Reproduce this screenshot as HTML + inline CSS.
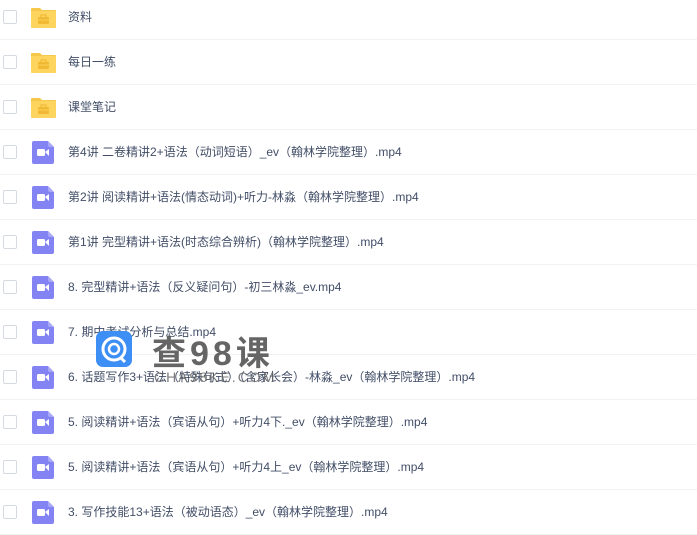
<!DOCTYPE html>
<html><head><meta charset="utf-8"><style>
body{margin:0;width:697px;height:531px;overflow:hidden;background:#fff;font-family:"Liberation Sans","Noto Sans CJK SC",sans-serif;position:relative}
.row{position:absolute;left:0;width:697px;height:45px;border-bottom:1px solid #f0f2f6;box-sizing:border-box}
.cb{position:absolute;left:3px;top:15px;width:12px;height:12px;border:1px solid #d5d9e0;border-radius:2px;background:#fff}
.ic{position:absolute;left:30px;top:12px}
.t{position:absolute;left:68px;top:15px;font-size:12px;color:#424e67;line-height:14px;white-space:nowrap}
.wm{position:absolute}
</style></head><body>
<div id="list"></div>
<script>
var F='<svg class="ic" width="27" height="22" viewBox="0 0 27 22"><path d="M1 2q0-1 1-1h8l2 2h13q1 0 1 1v16q0 1-1 1H2q-1 0-1-1z" fill="#f5c84c"/><rect x="1" y="4" width="25" height="17" rx="1" fill="#fdd55e"/><rect x="8" y="10" width="11" height="7" rx="1" fill="#f1b934"/><rect x="11" y="8" width="5" height="3" fill="none" stroke="#f1b934" stroke-width="1.2"/><line x1="8" y1="13" x2="19" y2="13" stroke="#fdd55e" stroke-width="0.8"/></svg>';
var V='<svg class="ic" style="left:32px;top:11px" width="22" height="23" viewBox="0 0 22 23"><path d="M2 0h14l6 6v15q0 2-2 2H2q-2 0-2-2V2q0-2 2-2z" fill="#8383f4"/><path d="M16 0l6 6h-4q-2 0-2-2z" fill="#a9a9f8"/><rect x="5" y="8" width="8" height="7" rx="1.5" fill="#fff"/><path d="M13 11l4-3v7z" fill="#fff"/></svg>';
var rows=[[F,"资料"],[F,"每日一练"],[F,"课堂笔记"],[V,"第4讲 二卷精讲2+语法（动词短语）_ev（翰林学院整理）.mp4"],[V,"第2讲 阅读精讲+语法(情态动词)+听力-林淼（翰林学院整理）.mp4"],[V,"第1讲 完型精讲+语法(时态综合辨析)（翰林学院整理）.mp4"],[V,"8. 完型精讲+语法（反义疑问句）-初三林淼_ev.mp4"],[V,"7. 期中考试分析与总结.mp4"],[V,"6. 话题写作3+语法（特殊句式）（含家长会）-林淼_ev（翰林学院整理）.mp4"],[V,"5. 阅读精讲+语法（宾语从句）+听力4下._ev（翰林学院整理）.mp4"],[V,"5. 阅读精讲+语法（宾语从句）+听力4上_ev（翰林学院整理）.mp4"],[V,"3. 写作技能13+语法（被动语态）_ev（翰林学院整理）.mp4"]];
var h='';rows.forEach(function(r,i){h+='<div class="row" style="top:'+(i*45-5)+'px"><div class="cb"></div>'+r[0]+'<div class="t">'+r[1]+'</div></div>';});
document.getElementById('list').innerHTML=h;
</script>
<svg class="wm" style="left:96px;top:331px" width="36" height="36" viewBox="0 0 36 36"><rect width="36" height="36" rx="7" fill="#3d8ef5"/><circle cx="18" cy="18" r="11" fill="none" stroke="#fff" stroke-width="3"/><circle cx="18" cy="18" r="5" fill="none" stroke="#fff" stroke-width="2.5"/><path d="M24 26l5 5" stroke="#fff" stroke-width="3"/></svg>
<div class="wm" style="left:152px;top:326px;font-size:34px;font-weight:bold;color:#555;letter-spacing:4px;opacity:.9">查98课</div>
<div class="wm" style="left:154px;top:369px;font-size:14px;color:#666;letter-spacing:2px;opacity:.85">CHA98KE.COM</div>
</body></html>
